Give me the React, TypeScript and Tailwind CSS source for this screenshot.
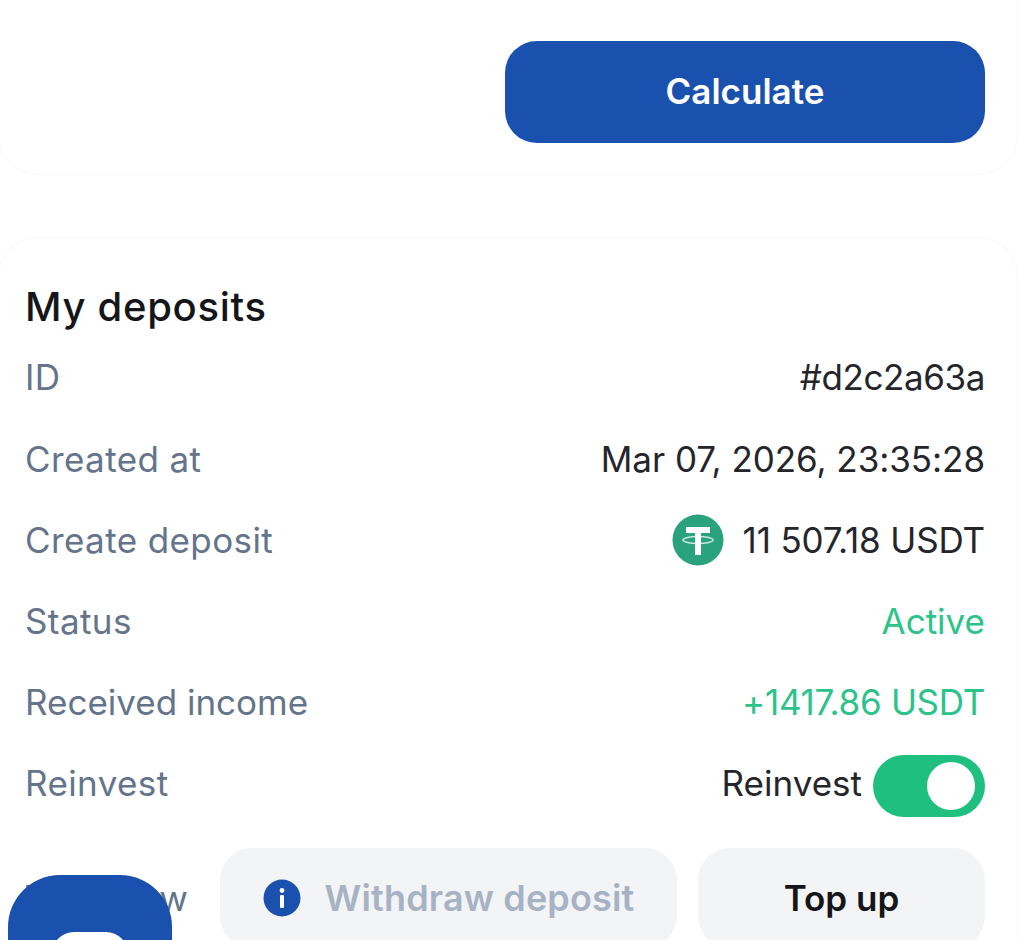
const FONT = "font-['Inter','Liberation_Sans',sans-serif]";

function TetherIcon() {
  return (
    <svg width="52" height="52" viewBox="0 0 52 52" aria-hidden>
      <circle cx="26" cy="26" r="25.5" fill="#2ba27e" />
      <path d="M14 13h24v6h-9v4.5h-6V19h-9z M23 23h6v18h-6z" fill="#ffffff" />
      <ellipse cx="26" cy="26" rx="15" ry="3.5" fill="none" stroke="#ffffff" strokeWidth="1.6" opacity="0.75" />
    </svg>
  );
}

function InfoIcon() {
  return (
    <svg width="38" height="38" viewBox="0 0 38 38" aria-hidden>
      <circle cx="19" cy="19" r="18.5" fill="#1a50ae" />
      <circle cx="19" cy="11.5" r="2.4" fill="#ffffff" />
      <rect x="17" y="16" width="4" height="13" rx="1.2" fill="#ffffff" />
    </svg>
  );
}

function Row({ label, tight, children }: { label: string; tight?: boolean; children: React.ReactNode }) {
  return (
    <div className="flex h-[81.2px] items-center justify-between">
      <span className={tight ? "text-[#64748b]" : "tracking-[0.4px] text-[#64748b]"}>{label}</span>
      {children}
    </div>
  );
}

export default function App() {
  return (
    <div className={`relative h-[940px] overflow-hidden bg-white text-[35px] text-[#24262b] ${FONT}`}>
      {/* Calculator card, cut off by the top of the page */}
      <section className="-ml-[2px] flex h-[175px] justify-end rounded-b-[40px] border border-t-0 border-[#f7f8f9] pt-[41px] pr-[32px]">
        <button className="h-[102px] w-[480px] rounded-[32px] bg-[#1a50ae] pb-[2px] font-semibold text-white">
          Calculate
        </button>
      </section>

      <section className="mt-[62px] -ml-[2px] rounded-t-[40px] border border-b-0 border-[#f7f8f9] pr-[32px] pl-[26px]">
        <h2 className="mt-[44px] text-[40px] leading-[50px] font-medium tracking-[0.7px] text-[#14161a]">My deposits</h2>
        <div className="mt-[5px]">
          <Row label="ID">
            <span className="tracking-[-0.4px]">#d2c2a63a</span>
          </Row>
          <Row label="Created at">
            <span className="tracking-[-0.05px]">Mar 07, 2026, 23:35:28</span>
          </Row>
          <Row label="Create deposit">
            <span className="flex items-center gap-[19px] tracking-[-0.15px]">
              <TetherIcon />
              11 507.18 USDT
            </span>
          </Row>
          <Row label="Status">
            <span className="text-[#2cc38a]">Active</span>
          </Row>
          <Row label="Received income" tight>
            <span className="tracking-[-0.3px] text-[#2cc38a]">+1417.86 USDT</span>
          </Row>
          <Row label="Reinvest">
            <span className="flex items-center gap-[11px]">
              Reinvest
              <span className="mt-[4px] flex h-[62px] w-[112px] items-center justify-end rounded-full bg-[#1fc07f] pr-[10px]">
                <span className="h-[48px] w-[48px] rounded-full bg-white" />
              </span>
            </span>
          </Row>
        </div>
        <div className="mt-[24px] flex items-center">
          <span className="w-[195px] shrink-0 tracking-[0.7px] text-[#64748b]">Withdraw</span>
          <button className="flex h-[100px] w-[457px] items-center justify-center gap-[24px] rounded-[32px] bg-[#f3f4f6] text-[36px] font-semibold tracking-[0.15px] text-[#a7b2c5]">
            <InfoIcon />
            Withdraw deposit
          </button>
          <button className="ml-[21px] h-[100px] w-[287px] rounded-[32px] bg-[#f3f4f6] font-semibold text-[#14161a]">
            Top up
          </button>
        </div>
      </section>

      {/* Floating chat button */}
      <div className="absolute top-[875px] left-[8px] flex h-[130px] w-[164px] justify-center rounded-t-[52px] bg-[#1a50ae]">
        <div className="mt-[57px] h-[40px] w-[76px] rounded-t-[22px] bg-white" />
      </div>
    </div>
  );
}
